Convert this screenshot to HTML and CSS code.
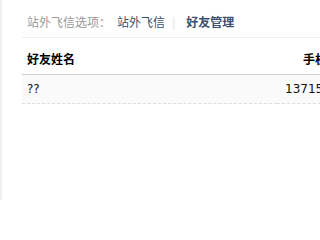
FILE: index.html
```html
<!DOCTYPE html>
<html lang="zh-CN">
<head>
<meta charset="utf-8">
<title>好友管理</title>
<link rel="stylesheet" href="styles.css">
</head>
<body>
<div class="page">
  <div class="main">
    <div class="nav">
      <span class="nav-label">站外飞信选项：</span>
      <a class="nav-link" href="#">站外飞信</a>
      <span class="nav-sep">|</span>
      <a class="nav-link nav-current" href="#">好友管理</a>
    </div>
    <table class="friends">
      <colgroup>
        <col class="col-name">
        <col class="col-phone">
        <col class="col-op">
      </colgroup>
      <thead>
        <tr>
          <th class="th-name">好友姓名</th>
          <th class="th-phone">手机号码</th>
          <th class="th-op">操作</th>
        </tr>
      </thead>
      <tbody>
        <tr>
          <td class="td-name">??</td>
          <td class="td-phone">13715826493</td>
          <td class="td-op">删除</td>
        </tr>
      </tbody>
    </table>
  </div>
</div>
</body>
</html>
```
FILE: styles.css
```css
html, body {
  margin: 0;
  padding: 0;
  background: #fff;
  overflow: hidden;
}
.page {
  min-height: 200px;
  width: 520px;
  border-left: 2px solid #f1f1f1;
  padding-left: 20px;
  font-family: "Noto Sans CJK SC", "DejaVu Sans", sans-serif;
  font-size: 12px;
  color: #000;
}
.main {
  display: flex;
  flex-direction: column;
}
.nav {
  display: flex;
  align-items: center;
  padding: 12px 5px 5px;
  line-height: 20px;
  border-bottom: 1px solid #f0f0f0;
}
.nav-label {
  color: #9a9a9a;
}
.nav-link {
  color: #3b4f6f;
  text-decoration: none;
  margin-left: 6px;
}
.nav-sep {
  color: #dcdcdc;
  margin: 0 7px 0 7px;
}
.nav-current {
  margin-left: 4px;
  font-weight: bold;
}
.friends {
  width: 500px;
  border-collapse: collapse;
  table-layout: fixed;
}
.col-name { width: 255px; }
.col-phone { width: 100px; }
.col-op { width: 145px; }
.friends th {
  padding: 13px 5px 7px;
  line-height: 16px;
  font-weight: bold;
  border-bottom: 1px solid #cfcfcf;
  color: #000;
}
.th-name { text-align: left; }
.th-phone, .th-op { text-align: center; }
.friends td {
  padding: 6px 5px;
  line-height: 16px;
  background: #fafafa;
  border-bottom: 1px dashed #dedede;
  font-family: "DejaVu Sans", sans-serif;
  color: #111;
}
.td-name { text-align: left; }
.td-phone, .td-op { text-align: center; white-space: nowrap; }
```
